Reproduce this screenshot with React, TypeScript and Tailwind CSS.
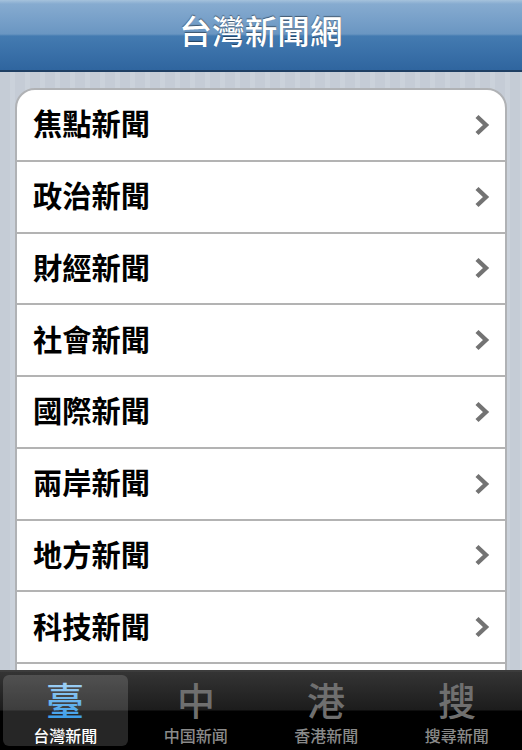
import React from "react";

const sections = ["焦點新聞", "政治新聞", "財經新聞", "社會新聞", "國際新聞", "兩岸新聞", "地方新聞", "科技新聞", "體育新聞"];

const tabs = [
  { glyph: "臺", label: "台灣新聞", active: true },
  { glyph: "中", label: "中国新闻", active: false },
  { glyph: "港", label: "香港新聞", active: false },
  { glyph: "搜", label: "搜尋新聞", active: false },
];

function Chevron() {
  return (
    <svg width="16" height="22" viewBox="0 0 16 22" className="shrink-0">
      <path d="M3 2.5 L12 11 L3 19.5" fill="none" stroke="#737373" strokeWidth="4.4" />
    </svg>
  );
}

// the tab icons are calligraphy glyphs, the active one has a blue gradient
function TabGlyph({ glyph, active }: { glyph: string; active: boolean }) {
  return (
    <svg width="44" height="52" viewBox="0 0 44 52" className="shrink-0">
      <defs>
        <linearGradient id="activeGlyph" x1="0" y1="0" x2="0" y2="1">
          <stop offset="0" stopColor="#a5d3f5" />
          <stop offset="1" stopColor="#2f97e8" />
        </linearGradient>
      </defs>
      <text
        x="22"
        y="40"
        textAnchor="middle"
        fontSize="38"
        fontWeight="500"
        fill={active ? "url(#activeGlyph)" : "#6f6f6f"}
      >
        {glyph}
      </text>
    </svg>
  );
}

export default function App() {
  return (
    <div className="h-[750px] w-[522px] flex flex-col overflow-hidden font-['Liberation_Sans','Noto_Sans_CJK_TC',sans-serif]">
      {/* Header */}
      <div className="h-[72px] shrink-0 flex items-center justify-center border-b-2 border-[#1f3f63] bg-[linear-gradient(180deg,#a5c2dc_0px,#86abd0_4px,#6a96c2_34px,#447bb1_36px,#2f659f_70px)]">
        <h1 className="text-[32.5px] tracking-[0.2px] leading-none font-medium text-white pb-1 [text-shadow:0_-1px_1px_rgba(0,0,0,0.45)]">台灣新聞網</h1>
      </div>

      {/* List */}
      <div className="flex-1 min-h-0 overflow-hidden px-[15px] pt-[16px] bg-[repeating-linear-gradient(90deg,#c5ccd6_0px,#c5ccd6_10px,#cbd2db_10px,#cbd2db_15px)]">
        <div className="bg-white rounded-t-[20px] border-2 border-[#b0b2b5]">
          {sections.map((s) => (
            <div key={s} className="h-[71.75px] flex items-center justify-between pl-[16px] pr-[15px] border-b-2 border-[#b3b3b3]">
              <span className="text-[29.25px] pt-[2px] leading-none font-bold text-black">{s}</span>
              <Chevron />
            </div>
          ))}
        </div>
      </div>

      {/* Tab bar */}
      <div className="h-[80px] shrink-0 flex gap-[6px] px-[3px] pt-[3px] pb-[4px] border-t-2 border-[#3c3c3c] bg-[linear-gradient(180deg,#343434_0px,#1c1c1c_38px,#000000_39px)]">
        {tabs.map((t) => (
          <div
            key={t.label}
            className={"flex-1 flex flex-col items-center rounded-md " + (t.active ? "bg-white/15" : "")}
          >
            <TabGlyph glyph={t.glyph} active={t.active} />
            <span className={"text-[16px] leading-[19px] font-medium " + (t.active ? "text-white" : "text-[#8a8a8a]")}>
              {t.label}
            </span>
          </div>
        ))}
      </div>
    </div>
  );
}
